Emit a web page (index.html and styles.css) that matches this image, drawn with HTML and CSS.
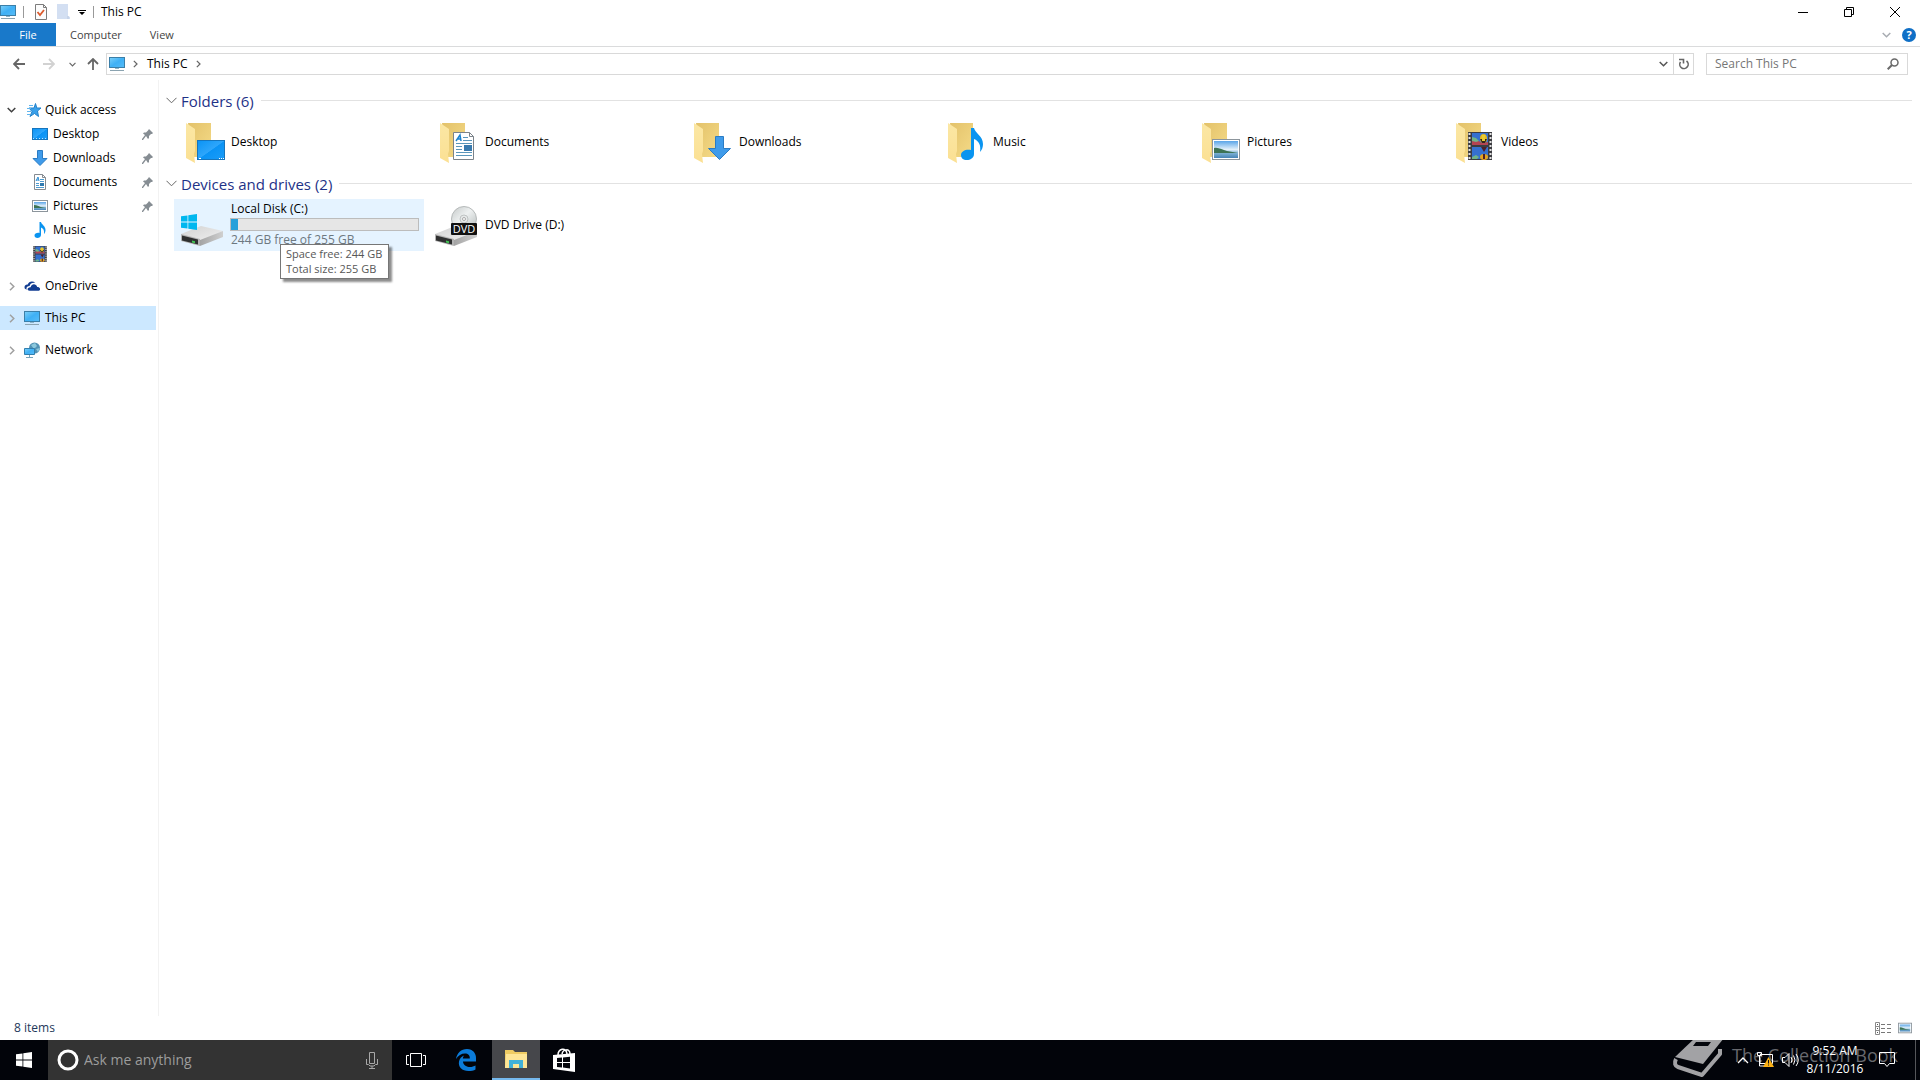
FILE: index.html
```html
<!DOCTYPE html>
<html lang="en">
<head>
<meta charset="utf-8">
<title>This PC</title>
<link rel="stylesheet" href="styles.css">
</head>
<body>
<svg class="sprite" aria-hidden="true">
  <defs>
    <linearGradient id="g-screen" x1="0" y1="0" x2="1" y2="1"><stop offset="0" stop-color="#7cd0f9"/><stop offset=".5" stop-color="#3fb0f5"/><stop offset="1" stop-color="#57bdf8"/></linearGradient>
    <linearGradient id="g-desk" x1="0" y1="0" x2="1" y2="1"><stop offset="0" stop-color="#0a93f5"/><stop offset=".5" stop-color="#2ea6fb"/><stop offset=".52" stop-color="#0a93f5"/><stop offset="1" stop-color="#1b9df8"/></linearGradient>
    <linearGradient id="g-back" x1="0" y1="0" x2="1" y2="1"><stop offset="0" stop-color="#e3c26a"/><stop offset="1" stop-color="#f5db88"/></linearGradient>
    <linearGradient id="g-flap" x1="0" y1="0" x2="0" y2="1"><stop offset="0" stop-color="#fbe7a4"/><stop offset="1" stop-color="#fbe093"/></linearGradient>
    <linearGradient id="g-sky" x1="0" y1="0" x2="0" y2="1"><stop offset="0" stop-color="#5aa5e8"/><stop offset=".5" stop-color="#e4f1fa"/><stop offset=".7" stop-color="#7fb3d6"/><stop offset="1" stop-color="#4583b5"/></linearGradient>
    <linearGradient id="g-top" x1="0" y1="0" x2="1" y2="1"><stop offset="0" stop-color="#d2d2d2"/><stop offset="1" stop-color="#f0f0f0"/></linearGradient>
    <linearGradient id="g-side" x1="0" y1="0" x2="1" y2="0"><stop offset="0" stop-color="#a4a4a4"/><stop offset="1" stop-color="#cfcfcf"/></linearGradient>
    <linearGradient id="g-disc" x1="0" y1="0" x2="1" y2="1"><stop offset="0" stop-color="#c4c8c8"/><stop offset=".45" stop-color="#eef1f1"/><stop offset="1" stop-color="#b4baba"/></linearGradient>
    <symbol id="pc" viewBox="0 0 16 16">
      <rect x=".5" y="1.500" width="15" height="10" fill="url(#g-screen)" stroke="#3b7fa8"/>
      <path d="M6 12h4v1H6z" fill="#8fb4c8"/><path d="M1 14.500h14" stroke="#8ba3b0"/>
    </symbol>
    <symbol id="desktop" viewBox="0 0 16 16">
      <rect x=".5" y="2.500" width="15" height="11" fill="url(#g-desk)" stroke="#1675bd"/>
      <path d="M1 12.500h14" stroke="#b8e1ff" stroke-dasharray="1 2"/>
    </symbol>
    <symbol id="down" viewBox="0 0 16 16"><path d="M5.500.500h5v8h4.500L8 15.500 1 8.500h4.500z" fill="#3f9bea" stroke="#2b7cc4"/></symbol>
    <symbol id="doc" viewBox="0 0 14 16">
      <path d="M1.500.500h8l3 3v12h-11z" fill="#fff" stroke="#858b91"/><path d="M9.500.500v3h3" fill="none" stroke="#858b91"/>
      <path d="M3 7l2-4 1 4M3.500 6h2" fill="none" stroke="#2b8cd2"/><path d="M7 5.500h4M3 9.500h3M3 11.500h3M3 13.500h8M7 7.500h4" stroke="#4e9bd0"/><path d="M7 9h4v3H7z" fill="#2f7ab0"/>
    </symbol>
    <symbol id="picture" viewBox="0 0 16 12">
      <rect x=".5" y=".5" width="15" height="11" fill="#fff" stroke="#8c959c"/><rect x="2" y="2" width="12" height="8" fill="url(#g-sky)"/>
      <path d="M2 5c3 0 6 2 9 2.500l3 .5H2z" fill="#3d7355"/>
    </symbol>
    <symbol id="note" viewBox="0 0 22 32">
      <path d="M10 0h3c1 5 9 8 9 16 0 3-1 6-3 8 1-7-1-11-6-13v15c0 4-4 6-7 6-4 0-6-2-6-5 0-4 5-6 10-5z" fill="#0a94f0"/>
    </symbol>
    <symbol id="film" viewBox="0 0 24 28">
      <path d="M0 0h24v28H0z" fill="#3c3c40"/><path d="M1.500 1v27M22.500 1v27" stroke="#e2e2e2" stroke-width="2" stroke-dasharray="2 2"/>
      <path d="M4 1h16v12H4zM4 15h16v12H4z" fill="#3570cf"/><path d="M4 9l5-1 5 3 6-1v3H4z" fill="#b44452"/><path d="M4 5l4 1 3 3-3 1-4-1zM4 25l4-2 3 2-2 2H4z" fill="#70b487"/>
      <ellipse cx="15.500" cy="6.500" rx="3.500" ry="4.500" fill="#e7b91d"/><path d="M12 7h7l-2 4h-3z" fill="#32251c"/><path d="M14 3h3v6h-3z" fill="#e9cb31"/><path d="M13 15h6l-3 5z" fill="#4d2028"/><ellipse cx="16" cy="25" rx="4" ry="3" fill="#e7a41d"/><path d="M15 22h2v5h-2z" fill="#4d2028"/>
    </symbol>
    <symbol id="folder" viewBox="0 0 27 40">
      <path d="M2 0h23v34H6z" fill="url(#g-back)"/><path d="M0 0l9 6v22l-1 3 1 9-9-5z" fill="url(#g-flap)"/>
    </symbol>
    <symbol id="star" viewBox="0 0 16 16"><path d="M9.500 1.500l1.300 4.500H15l-3.500 3 1 5.500-4-3-4.500 3 2-5L3 6h5z" fill="#3aa0ea" stroke="#2382cb"/><path d="M3 3.500h4M1 6.500h4M1 9.500h4M1 12.500h3" stroke="#5fb5ef"/></symbol>
    <symbol id="cloud" viewBox="0 0 17 12"><path d="M1 9C-.500 6 2 4 4 4.500 5 1 9 0 12 2.500 8 2 6 4 6 6c-3 0-4 2-3 4z" fill="#123d92"/><path d="M6 11C2.500 11 3.500 7 7 7.300 8 3 13 3 14 7c4 0 4 4 1 4z" fill="#123d92"/></symbol>
    <symbol id="net" viewBox="0 0 16 16"><circle cx="10.500" cy="6" r="5.500" fill="#5292b4"/><path d="M7 3l4-2 2 3-3 3zM12 7l4-1-2 4z" fill="#8cc8dc"/><path d="M.5 6.500h10v6H.5z" fill="url(#g-screen)" stroke="#327fae"/><path d="M5.500 13v2M2 15.500h7" stroke="#78a3b9"/></symbol>
    <symbol id="pin" viewBox="0 0 11 11"><path d="M7 0l4 4-1 1-1 0-2 2 0 2-1 1-2-3L1 11H0v-1l3-4L1 4.500l1-1h2l2-2z" fill="#868d93"/></symbol>
    <symbol id="chev-r" viewBox="0 0 6 9"><path d="M1 .700L4.800 4.500 1 8.300" fill="none" stroke="currentColor" stroke-width="1.500"/></symbol>
    <symbol id="chev-d" viewBox="0 0 9 6"><path d="M.700 1L4.500 4.800 8.300 1" fill="none" stroke="currentColor" stroke-width="1.500"/></symbol>
    <symbol id="arrow" viewBox="0 0 12 12"><path d="M12 6H1M6 1L1 6l5 5" fill="none" stroke="currentColor" stroke-width="1.800"/></symbol>
    <symbol id="winlogo" viewBox="0 0 16 16"><path d="M0 2.300l6.500-.9v6.200H0zM7.300 1.300L16 0v7.600H7.300zM0 8.400h6.500v6.200L0 13.700zM7.300 8.400H16V16l-8.700-1.300z" fill="currentColor"/></symbol>
    <symbol id="drive" viewBox="0 0 42 20"><path d="M0 8L20 0l22 5-23 10z" fill="url(#g-top)"/><path d="M19 14l23-9v6l-23 9z" fill="url(#g-side)"/><path d="M0 8l19 5v7L0 15z" fill="#b4b4b4"/><path d="M1 9.500l16 4v5l-16-4z" fill="#2f3030"/><path d="M11 14.500l3 .7v2l-3-.7z" fill="#40c452"/></symbol>
  </defs>
</svg>
<div class="window">
  <header class="titlebar">
    <svg class="i16"><use href="#pc"/></svg>
    <span class="rule"></span>
    <button class="plain tool-check" aria-label="Properties"><svg width="12" height="16" viewBox="0 0 12 16"><path d="M.5.500h8l3 3v12H.5z" fill="#fcfcfc" stroke="#7c7c7c"/><path d="M8.500.500v3h3" fill="none" stroke="#7c7c7c"/><path d="M2.500 8l2.500 3 4-5" fill="none" stroke="#dc5a2c" stroke-width="1.800"/></svg></button>
    <button class="plain tool-new" aria-label="New folder"><svg width="13" height="16" viewBox="0 0 13 16"><path d="M0 0h11v12l2 1v2H0z" fill="#d3dff2"/><path d="M11 12v3" stroke="#b9c8df"/></svg></button>
    <button class="plain tool-more" aria-label="Customize toolbar"><svg width="8" height="6" viewBox="0 0 8 6"><path d="M0 0h8v1H0zM1 2h6L4 5z"/></svg></button>
    <span class="rule"></span>
    <h1 class="title">This PC</h1>
    <div class="winbtns">
      <button class="plain" aria-label="Minimize"><svg width="10" height="10"><path d="M0 5.500h10" stroke="#000"/></svg></button>
      <button class="plain" aria-label="Restore"><svg width="10" height="10"><path d="M.5 2.500h7v7h-7zM2.500 2.500v-2h7v7h-2" fill="none" stroke="#000"/></svg></button>
      <button class="plain" aria-label="Close"><svg width="10" height="10"><path d="M0 0l10 10M10 0L0 10" stroke="#000"/></svg></button>
    </div>
  </header>
  <nav class="ribbon">
    <button class="plain tab tab-file">File</button>
    <button class="plain tab">Computer</button>
    <button class="plain tab">View</button>
    <button class="plain expand" aria-label="Expand the ribbon"><svg width="9" height="6"><use href="#chev-d"/></svg></button>
    <button class="help" aria-label="Help">?</button>
  </nav>
  <div class="address">
    <button class="plain back" aria-label="Back"><svg width="12" height="12"><use href="#arrow"/></svg></button>
    <button class="plain forward" aria-label="Forward"><svg width="12" height="12"><use href="#arrow"/></svg></button>
    <button class="plain recent" aria-label="Recent locations"><svg width="7" height="5"><use href="#chev-d"/></svg></button>
    <button class="plain up" aria-label="Up"><svg width="12" height="12"><use href="#arrow"/></svg></button>
    <div class="path">
      <svg class="i16"><use href="#pc"/></svg>
      <svg class="crumb" width="5" height="8"><use href="#chev-r"/></svg>
      <a class="here" href="#thispc">This PC</a>
      <svg class="crumb" width="5" height="8"><use href="#chev-r"/></svg>
      <button class="plain drop" aria-label="Previous locations"><svg width="9" height="6"><use href="#chev-d"/></svg></button>
      <button class="plain refresh" aria-label="Refresh"><svg width="12" height="12" viewBox="0 0 12 12"><path d="M2.500 4A4.200 4.200 0 1 0 8.500 3M1 1.500h4.500v4" fill="none" stroke="#666" stroke-width="1.600"/></svg></button>
    </div>
    <label class="search"><input class="search-input" type="search" placeholder="Search This PC" aria-label="Search This PC"><svg width="12" height="12" viewBox="0 0 12 12"><circle cx="7.500" cy="4.500" r="3.500" fill="none" stroke="#6a6a6a" stroke-width="1.500"/><path d="M5 7L.700 11.300" stroke="#6a6a6a" stroke-width="2"/></svg></label>
  </div>
  <div class="body">
    <aside class="tree">
      <div class="branch">
        <a class="node open" href="#quick"><svg class="twist" width="9" height="6"><use href="#chev-d"/></svg><svg class="i16"><use href="#star"/></svg>Quick access</a>
        <a class="node leaf" href="#desktop-f"><svg class="i16"><use href="#desktop"/></svg>Desktop<svg class="pin"><use href="#pin"/></svg></a>
        <a class="node leaf" href="#downloads-f"><svg class="i16"><use href="#down"/></svg>Downloads<svg class="pin"><use href="#pin"/></svg></a>
        <a class="node leaf" href="#documents-f"><svg class="i16"><use href="#doc"/></svg>Documents<svg class="pin"><use href="#pin"/></svg></a>
        <a class="node leaf" href="#pictures-f"><svg class="i16"><use href="#picture"/></svg>Pictures<svg class="pin"><use href="#pin"/></svg></a>
        <a class="node leaf" href="#music-f"><svg class="i16"><use href="#note"/></svg>Music</a>
        <a class="node leaf" href="#videos-f"><svg class="i16"><use href="#film"/></svg>Videos</a>
      </div>
      <div class="branch"><a class="node" href="#onedrive"><svg class="twist" width="6" height="9"><use href="#chev-r"/></svg><svg class="i16"><use href="#cloud"/></svg>OneDrive</a></div>
      <div class="branch"><a class="node selected" href="#thispc"><svg class="twist" width="6" height="9"><use href="#chev-r"/></svg><svg class="i16"><use href="#pc"/></svg>This PC</a></div>
      <div class="branch"><a class="node" href="#network"><svg class="twist" width="6" height="9"><use href="#chev-r"/></svg><svg class="i16"><use href="#net"/></svg>Network</a></div>
    </aside>
    <main class="content" id="thispc">
      <section>
        <h2 class="group"><svg width="11" height="7" viewBox="0 0 11 7"><path d="M.5.800l5 5 5-5" fill="none" stroke="#666"/></svg>Folders (6)</h2>
        <div class="tiles">
          <a class="tile" href="#desktop-f"><svg class="pic" viewBox="0 0 48 48"><use href="#folder" x="5" y="5" width="27" height="40"/><rect x="16.500" y="22.500" width="27" height="19" fill="url(#g-desk)" stroke="#1675bd"/><path d="M18 40.500h2M38 40.500h1M40 40.500h1M42 40.500h1" stroke="#fff"/></svg>Desktop</a>
          <a class="tile" href="#documents-f"><svg class="pic" viewBox="0 0 48 48"><use href="#folder" x="5" y="5" width="27" height="40"/><g transform="translate(0 1)"><path d="M18.500 13.500h16l4 4v23h-20z" fill="#fff" stroke="#7b838a"/><path d="M34.500 13.500v4h4" fill="none" stroke="#7b838a"/><path d="M21 22l4-6 1 6M23 20h3" fill="none" stroke="#1b83cf" stroke-width="1.500"/><path d="M28 18.500h5M28 21.500h9M21 24.500h16M21 27.500h6M21 30.500h6M21 33.500h16M21 36.500h16" stroke="#5a96bb"/><path d="M29 26h8v6h-8z" fill="#397aae"/></g></svg>Documents</a>
          <a class="tile" href="#downloads-f"><svg class="pic" viewBox="0 0 48 48"><use href="#folder" x="5" y="5" width="27" height="40"/><path d="M26.500 18.500h8v12h7L30.500 41.500 19.500 30.500h7z" fill="#3f9bea" stroke="#2b7cc4"/></svg>Downloads</a>
          <a class="tile" href="#music-f"><svg class="pic" viewBox="0 0 48 48"><use href="#folder" x="5" y="5" width="27" height="40"/><use href="#note" x="18" y="10" width="22" height="32"/></svg>Music</a>
          <a class="tile" href="#pictures-f"><svg class="pic" viewBox="0 0 48 48"><use href="#folder" x="5" y="5" width="27" height="40"/><g transform="translate(0 1)"><rect x="15.500" y="20.500" width="27" height="20" fill="#fff" stroke="#8c959c"/><rect x="17" y="22" width="24" height="17" fill="url(#g-sky)"/><path d="M17 29c5-1 8 2 13 3 4 1 7 1 11 2H17z" fill="#3d7355"/></g></svg>Pictures</a>
          <a class="tile" href="#videos-f"><svg class="pic" viewBox="0 0 48 48"><use href="#folder" x="5" y="5" width="27" height="40"/><use href="#film" x="17" y="14" width="24" height="28"/></svg>Videos</a>
        </div>
      </section>
      <section>
        <h2 class="group"><svg width="11" height="7" viewBox="0 0 11 7"><path d="M.5.800l5 5 5-5" fill="none" stroke="#666"/></svg>Devices and drives (2)</h2>
        <div class="tiles">
          <a class="tile hover" href="#c">
            <svg class="pic" viewBox="0 0 48 48"><use href="#drive" x="0" y="25" width="42" height="20"/><g color="#00b7ef"><use href="#winlogo" x="0" y="13" width="16" height="16"/></g></svg>
            <span class="disk"><span>Local Disk (C:)</span><span class="meter"><span class="used" style="width:4%"></span></span><span class="free">244 GB free of 255 GB</span></span>
            <span class="tip" role="tooltip">Space free: 244 GB<br>Total size: 255 GB</span>
          </a>
          <a class="tile" href="#d"><svg class="pic" viewBox="0 0 48 48"><use href="#drive" x="0" y="25" width="42" height="20"/><circle cx="29" cy="18" r="12.500" fill="url(#g-disc)" stroke="#b6baba"/><circle cx="29" cy="18" r="4" fill="#e6e9e9" stroke="#bfc3c3"/><circle cx="29" cy="18" r="1.500" fill="#fff" stroke="#aaa"/><rect x="16" y="22" width="26" height="12" rx="1" fill="#111"/><text class="dvd" x="29" y="32" text-anchor="middle">DVD</text></svg>DVD Drive (D:)</a>
        </div>
      </section>
    </main>
  </div>
  <footer class="status">
    <span class="count">8 items</span>
    <button class="plain" aria-label="Details view"><svg width="16" height="13"><path d="M.5.500h4v12h-4zM.5 4.500h4M.5 8.500h4" fill="none" stroke="#8a8a8a"/><path d="M2 2.500h1M2 6.500h1M2 10.500h1" stroke="#555"/><path d="M6 2.500h10M6 6.500h10M6 10.500h10" stroke="#777" stroke-dasharray="4 2"/></svg></button>
    <button class="plain" aria-label="Large icons view"><svg width="14" height="12"><use href="#picture"/></svg></button>
  </footer>
</div>
<div class="taskbar">
  <button class="plain task" aria-label="Start"><svg width="16" height="16"><use href="#winlogo"/></svg></button>
  <label class="cortana"><svg width="22" height="22"><circle cx="11" cy="11" r="9" fill="none" stroke="#fff" stroke-width="3"/></svg><input class="ask" type="text" placeholder="Ask me anything" aria-label="Ask me anything"><svg width="12" height="18"><path d="M3.500 1.500h5v11h-5zM.5 8v5.500h2l1.500 1.500h4l1.500-1.500h2V8M6 15v2M3 17.500h6" fill="none" stroke="#a8a8a8"/></svg></label>
  <button class="plain task" aria-label="Task view"><svg width="20" height="14"><path d="M4.500.500h11v13h-11zM3 2.500H.5v9H3M17 2.500h2.500v9H17" fill="none" stroke="#fff"/></svg></button>
  <button class="plain task edge" aria-label="Edge"><svg width="20" height="22" viewBox="0 0 20 22"><path d="M0 10C1 4 5 0 11 0c6 0 9 4.500 9 9v3.500H7c.2 4 4 5.500 7 5.500 2 0 4-.7 5.500-1.500v4C18 21.500 15 22 12.500 22 6 22 2 18 3 12.500 3.500 9.500 5.500 7.500 8 6.500c-.8 1-1 2-1.200 3h7C14 6 12 4.500 9 4.500 5.500 4.500 2 6.500 0 10z" fill="#0b7bd9"/></svg></button>
  <button class="plain task active" aria-label="File Explorer"><svg width="22" height="19" viewBox="0 0 22 19"><path d="M0 2V0h8l2 2h12v16H0z" fill="#eecb63"/><path d="M1 4h21v14H0z" fill="#fde596"/><path d="M4 18v-8h14v8h-4v-4H8v4z" fill="#41b1d8"/></svg></button>
  <button class="plain task" aria-label="Store"><svg width="22" height="24" viewBox="0 0 22 24"><path d="M0 7l22-2v19L0 21z" fill="#fff"/><path d="M5 7c0-6 8-9 9-1M9 6c1-5 8-6 8 0" fill="none" stroke="#fff" stroke-width="1.500"/><path d="M4 10l5-.5v4.500H4zM10 9.500l7-.7V14h-7zM4 15h5v4.500L4 19zM10 15h7v5.500l-7-1z" fill="#05070d"/></svg></button>
  <div class="tray">
    <div class="mark"><svg width="52" height="42" viewBox="0 0 52 42"><path d="M23-2h29L31 24 3 17z" fill="#a2a2a5"/><path d="M24 2h15l-3 4H21z" fill="#05070d"/><path d="M4 19c-2 4-1 7 2 8l24 8 18-21V9" fill="none" stroke="#a2a2a5" stroke-width="4" stroke-linejoin="round"/></svg><span>The Collection Book</span></div>
    <button class="plain" aria-label="Show hidden icons"><svg width="12" height="8"><path d="M1 7l5-5 5 5" fill="none" stroke="#fff" stroke-width="1.300"/></svg></button>
    <button class="plain" aria-label="Network status"><svg width="17" height="16"><path d="M3 2.500h12.500v9H3v-6M.5.500h4v3h-4zM2.500 4v10H8" fill="none" stroke="#fff"/><path d="M11.500 5L17 15H6z" fill="#fbb116"/><path d="M11.500 8v3.500M11.500 12.500v1" stroke="#111"/></svg></button>
    <button class="plain" aria-label="Volume"><svg width="17" height="14"><path d="M.5 4.500H3l4-4v13l-4-4H.5z" fill="none" stroke="#fff"/><path d="M9 4q2 3 0 6M11.500 2.500q3 4.500 0 9M14 1q4.500 6 0 12" fill="none" stroke="#fff"/></svg></button>
    <button class="plain clock"><span>9:52 AM</span><span>8/11/2016</span></button>
    <button class="plain action" aria-label="Action center"><svg width="16" height="16"><path d="M.5.500h15v11h-5L8 14.500l-2.500-3h-5z" fill="none" stroke="#fff"/></svg></button>
    <button class="plain showdesk" aria-label="Show desktop"></button>
  </div>
</div>
</body>
</html>
```
FILE: styles.css
```css
* { box-sizing: border-box; }
body {
  margin: 0;
  min-height: 100vh;
  display: flex;
  flex-direction: column;
  background: #fff;
  color: #000;
  font: 12px/16px "Open Sans", "Noto Sans", sans-serif;
}
.sprite { position: absolute; width: 0; height: 0; }
svg { display: block; flex: none; }
a { color: inherit; text-decoration: none; }
h1, h2 { margin: 0; font-weight: 400; }
.plain {
  display: flex;
  align-items: center;
  justify-content: center;
  padding: 0;
  border: 0;
  background: none;
  color: inherit;
  font: inherit;
}
.i16 { width: 16px; height: 16px; }
.window { flex: 1; display: flex; flex-direction: column; }

/* title bar */
.titlebar { display: flex; align-items: center; height: 23px; }
.rule { width: 1px; height: 12px; margin: 0 0 0 7px; background: #999; }
.tool-check { margin-left: 11px; }
.tool-new { margin-left: 10px; }
.tool-more { margin: 2px 0 0 8px; }
.titlebar .tool-more + .rule { margin-left: 7px; }
.title { margin-left: 7px; font-size: 12px; line-height: 16px; }
.winbtns { display: flex; margin-left: auto; padding-right: 2px; }
.winbtns .plain { width: 46px; height: 20px; }

/* ribbon */
.ribbon { display: flex; align-items: center; height: 24px; border-bottom: 1px solid #dadbdc; color: #444; font-size: 11px; }
.tab { height: 23px; padding: 0 14px; }
.tab-file { width: 56px; background: #1979ca; color: #fff; }
.expand { margin-left: auto; color: #a8acb2; }
.help { width: 14px; height: 14px; margin: 0 4px 0 11px; padding: 0; border: 0; border-radius: 50%; background: #0f6fc6; color: #fff; font: bold 11px/14px "Open Sans", sans-serif; }

/* address row */
.address { display: flex; align-items: center; padding: 6px 12px 5px 13px; color: #666; }
.forward { margin-left: 18px; color: #d2d2d2; }
.forward svg { transform: rotate(180deg); }
.recent { margin-left: 14px; }
.up { margin-left: 11px; }
.up svg { transform: rotate(90deg); }
.path { flex: 1; display: flex; align-items: center; height: 22px; margin-left: 7px; padding-left: 2px; border: 1px solid #d9d9d9; }
.crumb { margin-left: 8px; }
.here { margin-left: 9px; color: #000; }
.drop { width: 20px; height: 20px; margin-left: auto; color: #555; }
.refresh { width: 20px; height: 20px; border-left: 1px solid #d9d9d9; }
.search { display: flex; align-items: center; width: 202px; height: 22px; margin-left: 12px; padding: 0 8px; border: 1px solid #d9d9d9; }
.search-input { flex: 1; min-width: 0; padding: 0; border: 0; outline: 0; background: none; font: inherit; }
.search-input::placeholder { color: #767676; opacity: 1; }

/* folder tree */
.body { flex: 1; display: flex; }
.tree { width: 159px; padding: 18px 2px 0 0; border-right: 1px solid #f2f2f2; }
.branch { margin-bottom: 8px; }
.node { display: flex; align-items: center; height: 24px; padding-left: 9px; }
.node .i16 { margin-right: 5px; }
.twist { margin-right: 9px; color: #a0a0a0; }
.open .twist { margin: 0 8px 0 -2px; color: #404040; }
.node.open .i16 { margin: 0 3px 0 2px; }
.leaf { padding-left: 32px; }
.pin { width: 11px; height: 11px; margin: 0 3px 0 auto; }
.selected { background: #cce8ff; }

/* file area */
.content { flex: 1; padding: 5px 8px 0 7px; }
.group { display: flex; align-items: center; height: 31px; color: #1e3287; font-size: 15px; line-height: 20px; }
.group svg { margin-right: 4px; }
.group::after { content: ""; flex: 1; height: 1px; margin-left: 7px; background: #e2e2e2; }
.tiles { display: grid; grid-template-columns: repeat(auto-fill, 250px); gap: 4px; padding-left: 8px; }
.tile { position: relative; display: flex; align-items: center; height: 52px; padding-left: 7px; }
.pic { width: 48px; height: 48px; margin-right: 2px; }
.hover { background: #e5f3ff; }
.disk { display: flex; flex-direction: column; width: 189px; margin-left: -1px; padding-bottom: 2px; }
.disk > span { padding-left: 1px; }
.disk > .meter { height: 13px; margin: 1px 0; padding: 0; border: 1px solid #bcbcbc; background: #e6e6e6; }
.used { display: block; height: 11px; background: #26a0da; }
.free { color: #6d7880; }
.tip { position: absolute; left: 106px; top: 45px; z-index: 1; padding: 1px 6px 2px 5px; border: 1px solid #767676; background: #fff; box-shadow: 3px 3px 2px rgba(0, 0, 0, .45); color: #575757; font-size: 11px; line-height: 15px; white-space: nowrap; }
.dvd { fill: #fff; font: 11px "Open Sans", sans-serif; }

/* status bar */
.status { display: flex; align-items: center; gap: 7px; height: 24px; padding: 0 8px 0 14px; color: #1e395b; }
.count { margin-right: auto; }

/* taskbar */
.taskbar { display: flex; height: 40px; background: #02040a; color: #fff; }
.task { width: 48px; height: 40px; }
.edge { width: 52px; }
.active { border-bottom: 2px solid #76b9ed; background: #46474b; }
.cortana { display: flex; align-items: center; width: 344px; padding: 0 14px 0 9px; background: #333; }
.ask { flex: 1; min-width: 0; padding: 0 0 0 5px; border: 0; outline: 0; background: none; color: #fff; font: 14px/20px "Open Sans", sans-serif; }
.ask::placeholder { color: #9c9c9c; opacity: 1; }
.tray { position: relative; display: flex; align-items: center; gap: 8px; margin-left: auto; }
.tray .plain { position: relative; }
.mark { position: absolute; right: 22px; top: 0; display: flex; height: 40px; gap: 8px; overflow: hidden; color: #68696e; font-size: 18px; line-height: 30px; white-space: nowrap; }
.tray .clock { flex-direction: column; width: 56px; margin-right: 8px; line-height: 18px; }
.tray .action { margin-right: 12px; }
.tray .showdesk { width: 5px; height: 40px; border-left: 1px solid #55565a; }
```
